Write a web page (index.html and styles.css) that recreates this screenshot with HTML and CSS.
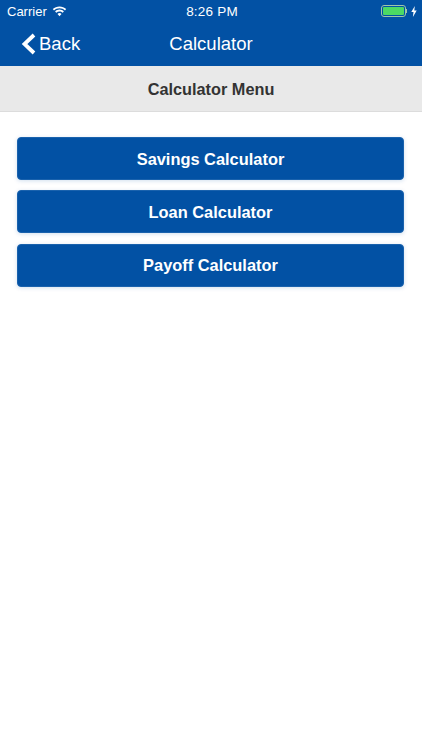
FILE: index.html
```html
<!DOCTYPE html>
<html lang="en">
<head>
<meta charset="utf-8">
<title>Calculator</title>
<link rel="stylesheet" href="styles.css">
</head>
<body>
<header class="appbar">
  <div class="status">
    <div class="status-left">
      <span>Carrier</span>
      <svg class="wifi" viewBox="0 0 15 11" width="15" height="11"><path fill="#fff" d="M7.500 2.200c2.100 0 4 .8 5.500 2.200l1.200-1.300C12.400 1.400 10 .4 7.500.4S2.600 1.400.8 3.100L2 4.400c1.500-1.400 3.400-2.200 5.500-2.200zM7.500 5.400c1.200 0 2.300.5 3.200 1.300l1.200-1.300C10.700 4.300 9.200 3.600 7.500 3.600s-3.200.7-4.400 1.800l1.200 1.300c.9-.8 2-1.300 3.200-1.300zM7.500 7.100c-.8 0-1.500.3-2 .8l2 2.300 2-2.300c-.5-.5-1.200-.8-2-.8z"/></svg>
    </div>
    <span class="clock">8:26 PM</span>
    <div class="status-right">
      <span class="battery"><span class="battery-fill"></span></span>
      <span class="battery-tip"></span>
      <svg class="bolt" viewBox="0 0 6 11" width="6" height="11"><path fill="#fff" d="M3.800 0 .3 6.100h2.200L1.900 11l3.800-6.500H3.300z"/></svg>
    </div>
  </div>
  <nav class="navbar">
    <a class="back">
      <svg viewBox="0 0 15 22" width="15" height="22"><path fill="none" stroke="#fff" stroke-width="3.800" d="M13 2 3.500 11 13 20"/></svg>
      <span>Back</span>
    </a>
    <h1 class="title">Calculator</h1>
  </nav>
</header>
<section class="subhead">Calculator Menu</section>
<main class="menu">
  <button class="menu-btn">Savings Calculator</button>
  <button class="menu-btn">Loan Calculator</button>
  <button class="menu-btn">Payoff Calculator</button>
</main>
</body>
</html>
```
FILE: styles.css
```css
* { box-sizing: border-box; }
html, body { margin: 0; height: 100%; background: #fff; overflow: hidden; }
body { font-family: "Liberation Sans", Arial, sans-serif; color: #333; }

.appbar { background: #0251a4; color: #fff; height: 66px; display: flex; flex-direction: column; }

.status { height: 22px; padding: 0 5px 0 7px; display: grid; grid-template-columns: 1fr auto 1fr; align-items: center; font-size: 13px; }
.status-left { display: flex; align-items: center; gap: 5px; }
.clock { font-size: 13.500px; letter-spacing: .2px; }
.status-right { display: flex; align-items: center; justify-content: flex-end; }
.battery { width: 25px; height: 12px; border: 1px solid #9fc6a8; border-radius: 3px; padding: 1px; display: flex; }
.battery-fill { flex: 1; background: #4cd964; border-radius: 1px; }
.battery-tip { width: 1.500px; height: 4px; background: #9fc6a8; margin-right: 4px; }

.navbar { flex: 1; display: grid; grid-template-columns: 1fr auto 1fr; align-items: center; padding: 0 21px; }
.back { display: flex; align-items: center; gap: 3px; font-size: 18.500px; }
.title { grid-column: 2; margin: 0; font-size: 18.500px; font-weight: 400; }

.subhead { height: 46px; padding-top: 1px; background: #e9e9e9; border-bottom: 1px solid #dcdcdc; display: flex; align-items: center; justify-content: center; font-size: 16.300px; font-weight: 700; color: #333; }

.menu { padding: 25px 18px 0 17px; display: flex; flex-direction: column; gap: 10.300px; }
.menu-btn { height: 43px; padding: 1px 0 0; border: 1px solid #1a62ad; border-radius: 4px; background: #0251a4; color: #fff; font-family: inherit; font-size: 16.400px; font-weight: 700; box-shadow: 0 1px 4px rgba(2, 81, 164, .18); }
```
